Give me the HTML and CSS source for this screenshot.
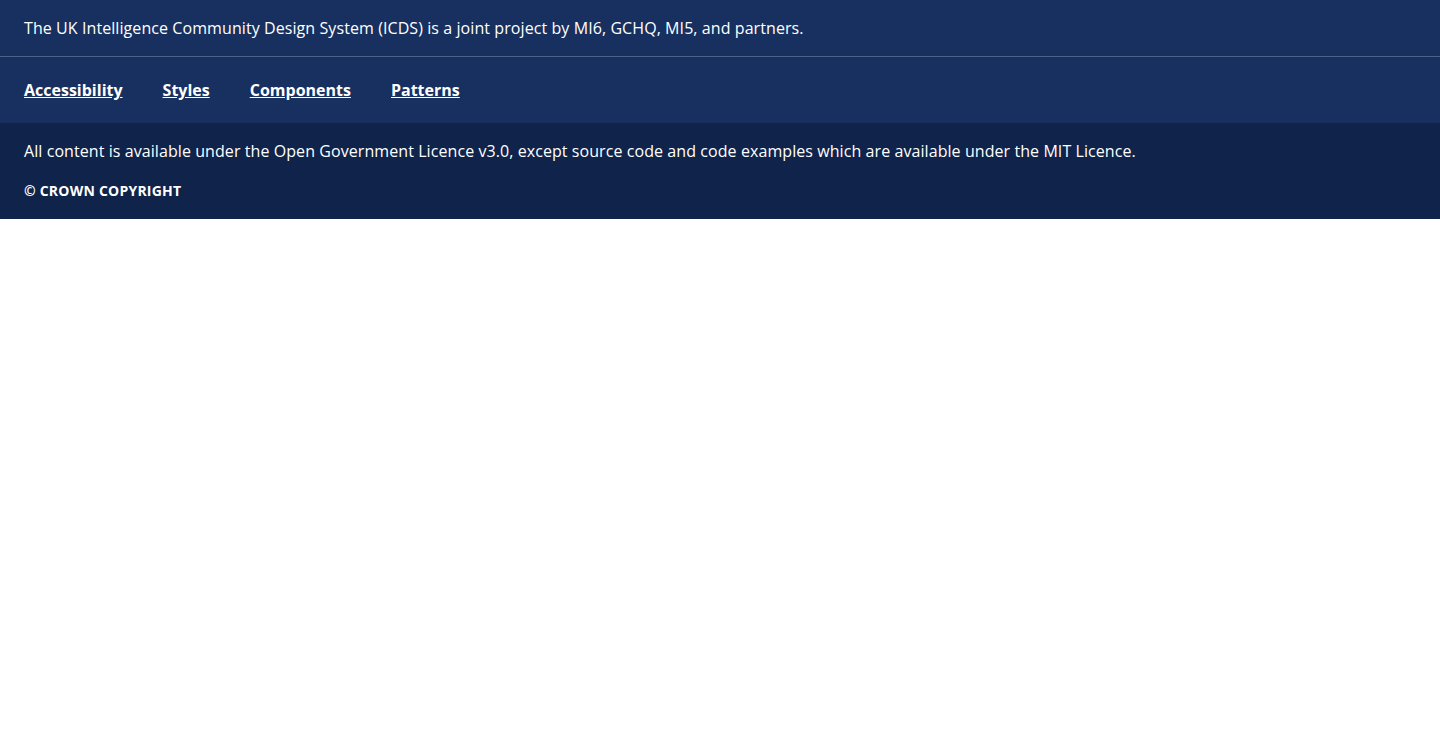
FILE: index.html
```html
<!DOCTYPE html>
<html lang="en">
<head>
<meta charset="utf-8">
<title>ICDS Footer</title>
<link rel="stylesheet" href="styles.css">
</head>
<body>
<footer class="footer">
  <div class="footer-top">
    <p class="footer-caption">The UK Intelligence Community Design System (ICDS) is a joint project by MI6, GCHQ, MI5, and partners.</p>
  </div>
  <nav class="footer-nav">
    <a href="#">Accessibility</a>
    <a href="#">Styles</a>
    <a href="#">Components</a>
    <a href="#">Patterns</a>
  </nav>
  <div class="footer-legal">
    <p class="footer-licence">All content is available under the Open Government Licence v3.0, except source code and code examples which are available under the MIT Licence.</p>
    <p class="footer-copyright">© Crown copyright</p>
  </div>
</footer>
</body>
</html>
```
FILE: styles.css
```css
html, body {
  margin: 0;
  padding: 0;
  background: #ffffff;
}
body {
  font-family: "Open Sans", "Noto Sans", sans-serif;
  color: #ffffff;
}
p { margin: 0; }
.footer-top {
  background: #17305f;
  padding: 16px 24px;
  border-bottom: 1px solid #4c6385;
}
.footer-caption {
  font-size: 16px;
  line-height: 24px;
  letter-spacing: 0.08px;
}
.footer-nav {
  background: #17305f;
  padding: 21px 24px;
  display: flex;
  gap: 40px;
}
.footer-nav a {
  color: #ffffff;
  font-weight: 700;
  font-size: 16px;
  line-height: 24px;
  text-decoration: underline;
}
.footer-legal {
  background: #10234a;
  padding: 16px 24px 18px;
}
.footer-licence {
  font-size: 16px;
  line-height: 24px;
  letter-spacing: 0.075px;
}
.footer-copyright {
  margin-top: 18px;
  font-size: 14px;
  line-height: 20px;
  font-weight: 700;
  letter-spacing: 0.22px;
  text-transform: uppercase;
}
```
